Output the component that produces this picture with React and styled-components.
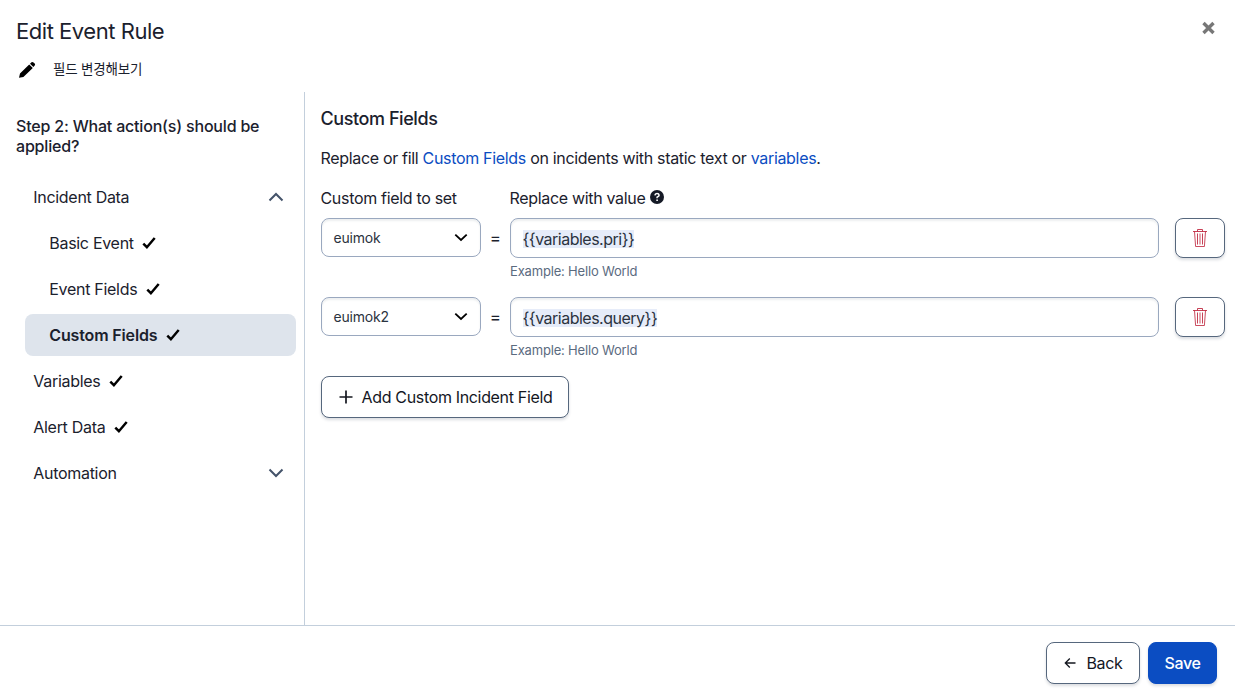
import React from "react";
import styled, { createGlobalStyle } from "styled-components";

const GlobalStyle = createGlobalStyle`
  *, *::before, *::after { box-sizing: border-box; }
  body {
    margin: 0;
    background: #fff;
    color: #1b212d;
    font-family: Inter, "Noto Sans CJK KR", sans-serif;
    font-size: 16px;
    line-height: 20px;
    letter-spacing: -0.32px;
  }
  h1, h2, h3, p { margin: 0; }
  button, input { font: inherit; letter-spacing: inherit; color: inherit; }
`;

const Dialog = styled.div`
  display: flex;
  flex-direction: column;
  width: 1235px;
  height: 698px;
  overflow: hidden;
`;

const Header = styled.header`
  display: flex;
  justify-content: space-between;
  height: 92px;
  padding: 17px 19px 0 16px;
`;

const Title = styled.h1`
  font-size: 22px;
  font-weight: 400;
  line-height: 28px;
  letter-spacing: -0.46px;
`;

const RuleName = styled.div`
  display: flex;
  align-items: center;
  gap: 16px;
  margin-top: 14px;
  font-size: 13.5px;
  line-height: 20px;
  letter-spacing: -0.2px;
`;

const PencilIcon = styled.svg`
  margin-top: 1px;
`;

const CloseButton = styled.button`
  display: flex;
  align-self: flex-start;
  margin-top: 4px;
  padding: 0;
  border: 0;
  background: none;
`;

const Body = styled.div`
  display: flex;
  flex: 1;
`;

const Sidebar = styled.nav`
  width: 305px;
  padding: 24px 8px 0 16px;
  border-right: 1px solid #c3cfdc;
`;

const StepTitle = styled.h2`
  font-size: 16px;
  font-weight: 500;
  line-height: 20px;
  letter-spacing: -0.19px;
`;

const NavList = styled.div`
  display: flex;
  flex-direction: column;
  gap: 4px;
  margin: 20px 0 0 9px;
`;

const NavItem = styled.div`
  display: flex;
  align-items: center;
  height: 42px;
  padding: 0 12px 0 ${(p) => (p.$nested ? 24.3 : 8.3)}px;
  border-radius: 8px;
  background: ${(p) => (p.$active ? "#dee4ec" : "transparent")};
  font-weight: ${(p) => (p.$active ? 600 : 400)};
  letter-spacing: ${(p) => (p.$active ? "-0.15px" : "-0.3px")};
`;

const CheckIcon = styled.svg`
  margin-left: 8.6px;
`;

const NavChevron = styled.svg`
  margin-left: auto;
`;

const Main = styled.main`
  flex: 1;
  padding: 16px 10px 0 16px;
  text-indent: -0.5px;
`;

const SectionTitle = styled.h2`
  font-size: 18px;
  font-weight: 500;
  line-height: 22px;
  letter-spacing: -0.42px;
`;

const Description = styled.p`
  margin-top: 18px;
`;

const Link = styled.a`
  color: #0b4dc2;
`;

const HelpIcon = styled.svg`
  margin: -3px 0 0 5px;
`;

const FieldRow = styled.div`
  display: flex;
  align-items: flex-start;
  height: 79px;
`;

const Labels = styled(FieldRow)`
  height: 20px;
  margin: 20px 0 10px;
`;

const LabelCell = styled.div`
  display: flex;
  align-items: center;
  width: ${(p) => p.$width};
`;

const Select = styled.div`
  display: flex;
  align-items: center;
  justify-content: space-between;
  width: 160px;
  height: 39px;
  padding: 0 12px;
  border: 1px solid #9aa8bf;
  border-radius: 8px;
  box-shadow: inset 0 2px 2px rgba(30, 45, 70, 0.08);
  color: #2b3340;
  font-size: 14px;
  letter-spacing: -0.18px;
`;

const Equals = styled.span`
  width: 29px;
  padding-top: 10px;
  font-size: 17px;
  text-align: center;
`;

const ValueColumn = styled.div`
  width: 649px;
`;

const ValueInput = styled.div`
  display: flex;
  align-items: center;
  height: 40px;
  padding: 2px 12px 0;
  border: 1px solid #9aa8bf;
  border-radius: 8px;
  box-shadow: inset 0 2px 2px rgba(30, 45, 70, 0.08);
  color: #2b3340;
  letter-spacing: -0.5px;
`;

const Token = styled.span`
  line-height: 18px;
  background: #e6ecf9;
`;

const Hint = styled.div`
  margin-top: 4px;
  color: #5b6b7f;
  font-size: 13px;
  line-height: 18px;
  letter-spacing: -0.18px;
  text-indent: 0;
`;

const Button = styled.button`
  display: flex;
  align-items: center;
  justify-content: center;
  width: ${(p) => p.$width}px;
  height: ${(p) => p.$height || 42}px;
  padding: 0 0 0 ${(p) => p.$shift || 0}px;
  border: 1px solid ${(p) => (p.$primary ? "#0b4dc2" : "#56677d")};
  border-radius: 8px;
  background: ${(p) => (p.$primary ? "#0b4dc2" : "#fff")};
  color: ${(p) => (p.$primary ? "#fff" : "#14171f")};
  font-weight: ${(p) => (p.$primary ? 500 : 400)};
  letter-spacing: -0.34px;
  text-indent: 0;
  box-shadow: 0 2px 3px rgba(30, 45, 70, 0.16);
`;

const DeleteButton = styled(Button)`
  margin-left: 16px;
`;

const ButtonLabel = styled.span`
  margin-left: ${(p) => p.$gap}px;
`;

const Footer = styled.footer`
  display: flex;
  justify-content: flex-end;
  gap: 8px;
  height: 73px;
  padding: 16px 18px 0;
  border-top: 1px solid #c3cfdc;
`;

function Check() {
  return (
    <CheckIcon width="14" height="14" viewBox="0 0 14 14">
      <path d="M1.3 7.6 4.9 11.2 12.7 2" fill="none" stroke="#000" strokeWidth="2.5" />
    </CheckIcon>
  );
}

function Chevron({ up }) {
  return (
    <NavChevron width="16" height="10" viewBox="0 0 16 10">
      <path d={up ? "M1.5 8.5 8 2l6.5 6.5" : "M1.5 1.5 8 8l6.5-6.5"} fill="none" stroke="#44536a" strokeWidth="2" />
    </NavChevron>
  );
}

function Trash() {
  return (
    <svg width="14" height="18" viewBox="0 0 14 18" fill="none" stroke="#bd2038">
      <path d="M0 2.5h14M4.5 2.5v-2h5v2" strokeOpacity=".85" />
      <path d="M1.5 2.5 2.6 17.5h8.8l1.1-15" strokeOpacity=".8" />
      <path d="M4.5 4.5v11M9.5 4.5v11" strokeOpacity=".85" />
      <path d="M7 4.5v11" strokeOpacity=".4" strokeWidth="2" />
    </svg>
  );
}

const navItems = [
  { label: "Incident Data", chevron: "up" },
  { label: "Basic Event", nested: true, done: true },
  { label: "Event Fields", nested: true, done: true },
  { label: "Custom Fields", nested: true, done: true, active: true },
  { label: "Variables", done: true },
  { label: "Alert Data", done: true },
  { label: "Automation", chevron: "down" },
];

const fields = [
  { name: "euimok", value: "{{variables.pri}}" },
  { name: "euimok2", value: "{{variables.query}}" },
];

export default function App() {
  return (
    <>
      <GlobalStyle />
      <Dialog>
        <Header>
          <div>
            <Title>Edit Event Rule</Title>
            <RuleName>
              <PencilIcon width="21" height="18" viewBox="0 0 21 18">
                <path d="M3 16.8 4 12.6 13.2 3.4l3.6 3.6-9.4 9zM14 2.7l1.5-1.4q1-.8 2 .1l1.2 1.2q.9 1 0 1.9l-1.3 1.5z" />
              </PencilIcon>
              <span>필드 변경해보기</span>
            </RuleName>
          </div>
          <CloseButton aria-label="Close">
            <svg width="15" height="14" viewBox="0 0 15 14">
              <path d="M2.5 2 12.5 12M12.5 2 2.5 12" stroke="#777" strokeWidth="3.4" />
            </svg>
          </CloseButton>
        </Header>
        <Body>
          <Sidebar>
            <StepTitle>
              Step 2: What action(s) should be
              <br />
              applied?
            </StepTitle>
            <NavList>
              {navItems.map((item) => (
                <NavItem key={item.label} $nested={item.nested} $active={item.active}>
                  <span>{item.label}</span>
                  {item.done && <Check />}
                  {item.chevron && <Chevron up={item.chevron === "up"} />}
                </NavItem>
              ))}
            </NavList>
          </Sidebar>
          <Main>
            <SectionTitle>Custom Fields</SectionTitle>
            <Description>
              Replace or fill <Link>Custom Fields</Link> on incidents with static text or <Link>variables</Link>.
            </Description>
            <Labels>
              <LabelCell $width="189px">Custom field to set</LabelCell>
              <LabelCell $width="auto">
                Replace with value
                <HelpIcon width="14" height="14" viewBox="0 0 14 14">
                  <circle cx="7" cy="7" r="7" fill="#151a26" />
                  <path d="M4.9 5.3Q5.1 3.4 7 3.4T9.1 5.2Q9.1 6.2 7.1 7.2V8.3" fill="none" stroke="#fff" strokeWidth="1.5" />
                  <path d="M6.3 9.4h1.6v1.6H6.3z" fill="#fff" />
                </HelpIcon>
              </LabelCell>
            </Labels>
            {fields.map((field) => (
              <FieldRow key={field.name}>
                <Select>
                  {field.name}
                  <svg width="14" height="9" viewBox="0 0 14 9">
                    <path d="M1.3 1.6 7 7l5.7-5.4" fill="none" stroke="#000" strokeWidth="1.8" />
                  </svg>
                </Select>
                <Equals>=</Equals>
                <ValueColumn>
                  <ValueInput>
                    <Token>{field.value}</Token>
                  </ValueInput>
                  <Hint>Example: Hello World</Hint>
                </ValueColumn>
                <DeleteButton $width={50} $height={40} aria-label="Delete">
                  <Trash />
                </DeleteButton>
              </FieldRow>
            ))}
            <Button $width={248} $shift={1}>
              <svg width="14" height="14" viewBox="0 0 14 14">
                <path d="M7 .5v13M.5 7h13" stroke="#14171f" strokeWidth="1.7" />
              </svg>
              <ButtonLabel $gap={9}>Add Custom Incident Field</ButtonLabel>
            </Button>
          </Main>
        </Body>
        <Footer>
          <Button $width={94} $shift={1}>
            <svg width="12" height="12" viewBox="0 0 12 12">
              <path d="M11.5 6H1.5M5.8 1.5 1.3 6l4.5 4.5" fill="none" stroke="#14171f" strokeWidth="1.3" />
            </svg>
            <ButtonLabel $gap={10}>Back</ButtonLabel>
          </Button>
          <Button $width={69} $primary>
            Save
          </Button>
        </Footer>
      </Dialog>
    </>
  );
}
